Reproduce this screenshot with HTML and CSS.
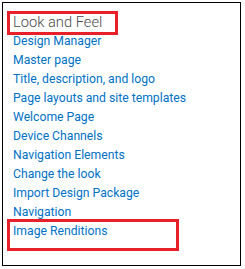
FILE: index.html
```html
<!DOCTYPE html>
<html>
<head>
<meta charset="utf-8">
<link rel="stylesheet" href="styles.css">
</head>
<body>
<div class="frame">
  <ul class="menu">
    <li class="head">Look and Feel</li>
    <li><a href="#">Design Manager</a></li>
    <li><a href="#">Master page</a></li>
    <li><a href="#">Title, description, and logo</a></li>
    <li><a href="#">Page layouts and site templates</a></li>
    <li><a href="#">Welcome Page</a></li>
    <li><a href="#">Device Channels</a></li>
    <li><a href="#">Navigation Elements</a></li>
    <li><a href="#">Change the look</a></li>
    <li><a href="#">Import Design Package</a></li>
    <li><a href="#">Navigation</a></li>
    <li><a href="#">Image Renditions</a></li>
  </ul>
  <div class="mark mark-head"></div>
  <div class="mark mark-last"></div>
</div>
</body>
</html>
```

FILE: styles.css
```css
html, body {
  margin: 0;
  padding: 0;
  background: #fff;
}
.frame {
  position: relative;
  margin: 2px 0 0 2px;
  width: 237px;
  height: 262px;
  border: 1px solid #000;
}
.menu {
  list-style: none;
  margin: 0;
  padding: 10px 0 0 10px;
  font-family: "Roboto", "Open Sans", sans-serif;
  font-size: 12.2px;
  line-height: 19px;
}
.menu li {
  white-space: nowrap;
}
.menu .head {
  color: #4a4a4a;
  font-size: 14.7px;
  font-weight: 300;
}
.menu a {
  color: #0072c6;
  text-decoration: none;
}
.mark {
  position: absolute;
  border: 3px solid #e8202a;
  box-sizing: border-box;
}
.mark-head {
  left: 4px;
  top: 8px;
  width: 111px;
  height: 24px;
}
.mark-last {
  left: 4px;
  top: 216px;
  width: 172px;
  height: 32px;
}
```
